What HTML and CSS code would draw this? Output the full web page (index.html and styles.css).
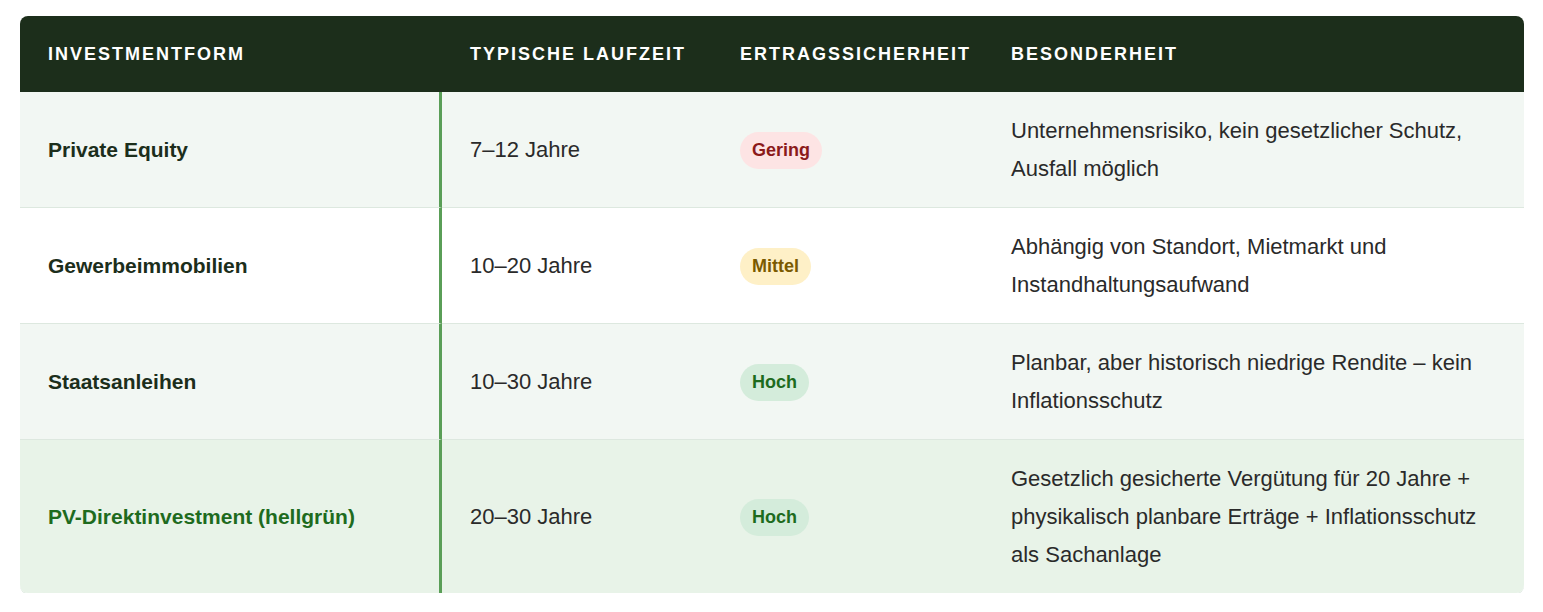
FILE: index.html
```html
<!DOCTYPE html>
<html lang="de">
<head>
<meta charset="utf-8">
<title>Investmentformen im Vergleich</title>
<link rel="stylesheet" href="styles.css">
</head>
<body>
<div class="table-wrap">
  <table class="compare">
    <thead>
      <tr>
        <th class="col-form">Investmentform</th>
        <th class="col-term">Typische Laufzeit</th>
        <th class="col-safe">Ertragssicherheit</th>
        <th class="col-note">Besonderheit</th>
      </tr>
    </thead>
    <tbody>
      <tr class="row-alt">
        <td class="name">Private Equity</td>
        <td>7–12 Jahre</td>
        <td><span class="badge badge-low">Gering</span></td>
        <td>Unternehmensrisiko, kein gesetzlicher Schutz, Ausfall möglich</td>
      </tr>
      <tr>
        <td class="name">Gewerbeimmobilien</td>
        <td>10–20 Jahre</td>
        <td><span class="badge badge-mid">Mittel</span></td>
        <td>Abhängig von Standort, Mietmarkt und Instandhaltungsaufwand</td>
      </tr>
      <tr class="row-alt">
        <td class="name">Staatsanleihen</td>
        <td>10–30 Jahre</td>
        <td><span class="badge badge-high">Hoch</span></td>
        <td>Planbar, aber historisch niedrige Rendite – kein Inflationsschutz</td>
      </tr>
      <tr class="row-highlight">
        <td class="name">PV-Direktinvestment (hellgrün)</td>
        <td>20–30 Jahre</td>
        <td><span class="badge badge-high">Hoch</span></td>
        <td>Gesetzlich gesicherte Vergütung für 20 Jahre + physikalisch planbare Erträge + Inflationsschutz als Sachanlage</td>
      </tr>
    </tbody>
  </table>
</div>
</body>
</html>
```

FILE: styles.css
```css
html, body {
  background: #ffffff;
}

body {
  margin: 16px 19px 0 20px;
  font-family: "Liberation Sans", Arial, sans-serif;
  color: #2a2a2a;
}

.table-wrap {
  border-radius: 8px;
  overflow: hidden;
  box-shadow: 0 1px 0 #dde8df;
}

.compare {
  width: 100%;
  border-collapse: separate;
  border-spacing: 0;
  table-layout: fixed;
}

.compare th,
.compare td {
  box-sizing: border-box;
  text-align: left;
}

.compare thead th {
  background: #1c2e1b;
  color: #ffffff;
  font-size: 18px;
  font-weight: 700;
  text-transform: uppercase;
  letter-spacing: 2px;
  line-height: 24px;
  padding: 26px 28px;
  white-space: nowrap;
}

.col-form { width: 422px; }
.col-term { width: 270px; }
.col-safe { width: 271px; }

.compare tbody td {
  font-size: 22px;
  line-height: 38px;
  padding: 19.5px 28px;
  vertical-align: middle;
  border-bottom: 1px solid #dde8df;
}

.compare tbody tr:last-child td {
  border-bottom: none;
}

.compare tbody td.name {
  font-size: 21px;
  font-weight: 700;
  color: #1c2e1b;
  border-right: 3px solid #5a9e57;
}

.row-alt td {
  background: #f2f7f3;
}

.row-highlight td {
  background: #e8f3e8;
}

.compare tbody .row-highlight td.name {
  color: #1e6b1e;
}

.badge {
  display: inline-block;
  font-size: 18px;
  font-weight: 700;
  line-height: 25px;
  padding: 6px 12px;
  border-radius: 999px;
  vertical-align: middle;
}

.badge-low {
  background: #fde4e4;
  color: #8b1a1a;
}

.badge-mid {
  background: #fef0c7;
  color: #7a5a00;
}

.badge-high {
  background: #d4ecdb;
  color: #1e6b1e;
}
```
